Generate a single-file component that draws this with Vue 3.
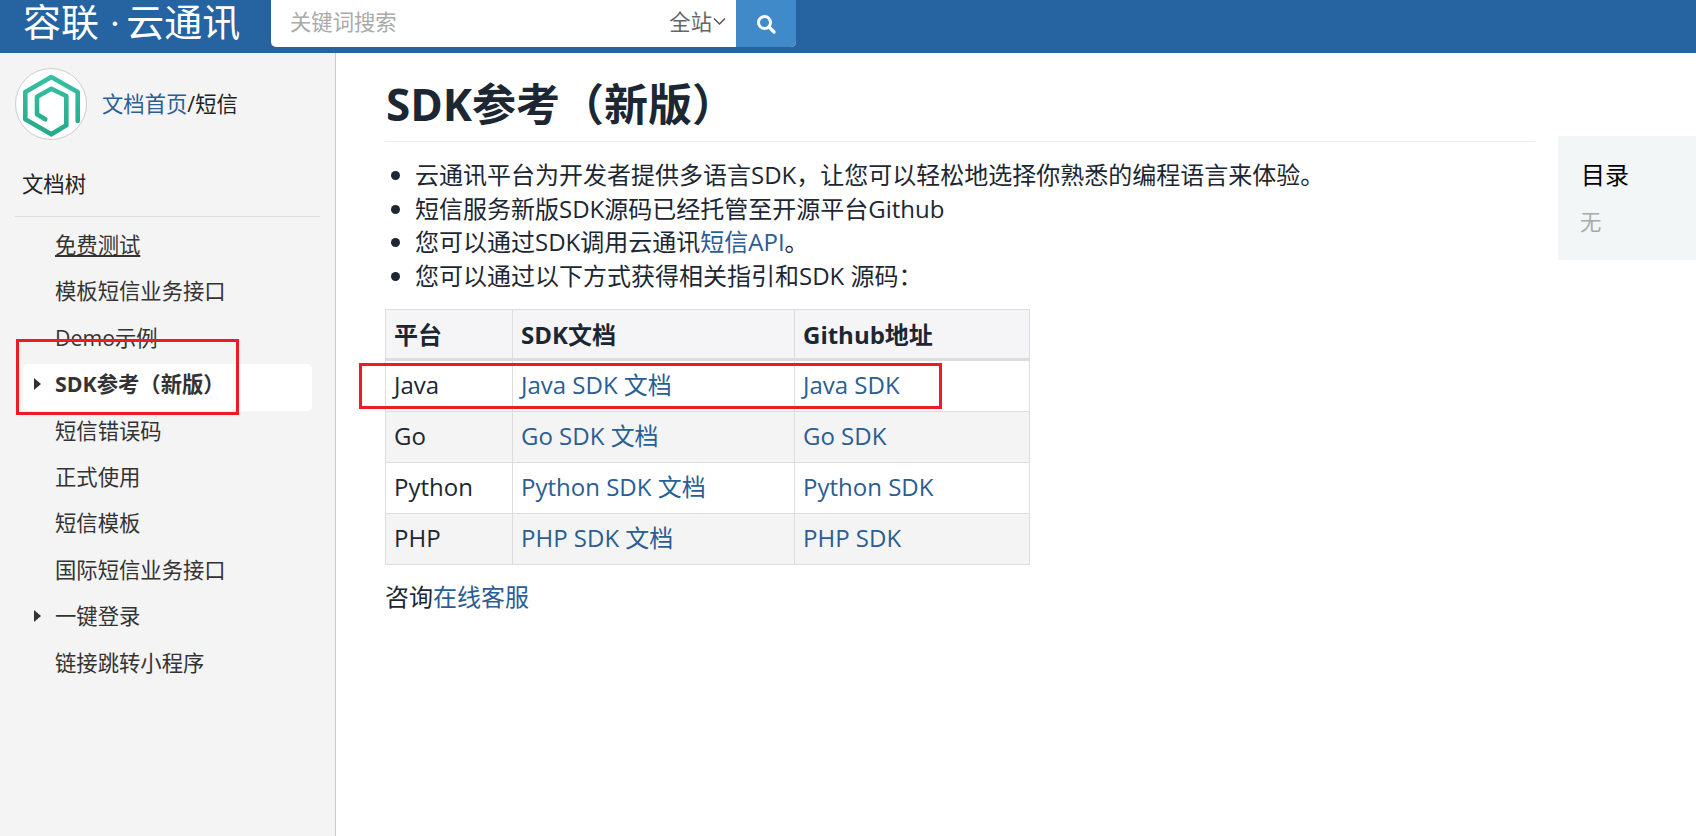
<script setup>
const nav = [
  { t: '免费测试', u: true },
  { t: '模板短信业务接口' },
  { t: 'Demo示例' },
  { t: 'SDK参考（新版）', active: true, arrow: true },
  { t: '短信错误码' },
  { t: '正式使用' },
  { t: '短信模板' },
  { t: '国际短信业务接口' },
  { t: '一键登录', arrow: true },
  { t: '链接跳转小程序' },
]
const rows = [
  ['Java', 'Java SDK 文档', 'Java SDK'],
  ['Go', 'Go SDK 文档', 'Go SDK'],
  ['Python', 'Python SDK 文档', 'Python SDK'],
  ['PHP', 'PHP SDK 文档', 'PHP SDK'],
]
</script>

<template>
  <div class="page">
    <header class="top">
      <div class="brand">容联 <span class="dot">·</span>云通讯</div>
      <div class="search">
        <span class="ph">关键词搜索</span>
        <span class="scope">全站<svg width="13" height="9" viewBox="0 0 13 9"><path d="M1 1.500 6.500 7 12 1.500" fill="none" stroke="#555" stroke-width="1.500"/></svg></span>
        <span class="btn">
          <svg width="20" height="20" viewBox="0 0 20 20"><circle cx="8.500" cy="8.500" r="6" fill="none" stroke="#fff" stroke-width="3"/><path d="M13 13l5 5" stroke="#fff" stroke-width="3.200" stroke-linecap="round"/></svg>
        </span>
      </div>
    </header>
    <div class="body">
      <aside class="side">
        <div class="who">
          <span class="avatar">
            <svg width="70" height="70" viewBox="0 0 70 70">
              <defs><linearGradient id="lg" x1="0" y1="0" x2="0" y2="1"><stop offset="0" stop-color="#38bfa4"/><stop offset="1" stop-color="#25ab89"/></linearGradient></defs>
              <path class="logo" d="M61.700 52V23L35.300 8 9.300 23V50.300L35.300 65.300 50.300 56.300V27L35.300 19.700 21 27.700V45.300L29.300 50.300" fill="none" stroke="url(#lg)" stroke-width="4.600" stroke-linecap="round" stroke-linejoin="round"/>
            </svg>
          </span>
          <span class="crumb"><a>文档首页</a>/短信</span>
        </div>
        <div class="tree">文档树</div>
        <ul class="nav">
          <li v-for="n in nav" :key="n.t" :class="{ active: n.active }">
            <i v-if="n.arrow" class="arrow"></i>
            <span :class="{ u: n.u }">{{ n.t }}</span>
          </li>
        </ul>
      </aside>
      <main class="main">
        <h1>SDK参考（新版）</h1>
        <ul class="list">
          <li>云通讯平台为开发者提供多语言SDK，让您可以轻松地选择你熟悉的编程语言来体验。</li>
          <li>短信服务新版SDK源码已经托管至开源平台Github</li>
          <li>您可以通过SDK调用云通讯<a>短信API</a>。</li>
          <li>您可以通过以下方式获得相关指引和SDK 源码：</li>
        </ul>
        <table>
          <thead><tr><th class="c1">平台</th><th class="c2">SDK文档</th><th class="c3">Github地址</th></tr></thead>
          <tbody>
            <tr v-for="r in rows" :key="r[0]"><td>{{ r[0] }}</td><td><a>{{ r[1] }}</a></td><td><a>{{ r[2] }}</a></td></tr>
          </tbody>
        </table>
        <p class="ask">咨询<a>在线客服</a></p>
      </main>
      <aside class="toc">
        <div class="toc-title">目录</div>
        <div class="toc-none">无</div>
      </aside>
    </div>
    <div class="mark m1"></div>
    <div class="mark m2"></div>
  </div>
</template>

<style>
html, body { margin: 0; background: #fff; overflow: hidden; }
</style>

<style scoped>
.page {
  position: relative;
  width: 1696px;
  height: 836px;
  overflow: hidden;
  font-family: "Open Sans", "Noto Sans CJK SC", sans-serif;
  font-size: 24px;
  line-height: 33.6px;
  color: #1c2733;
}
a { color: #2a5e94; }
.top {
  height: 53px;
  background: #2563a1;
  display: flex;
  align-items: flex-start;
}
.brand {
  width: 271px;
  padding-left: 23px;
  box-sizing: border-box;
  font-family: "Liberation Serif", "Noto Sans CJK SC", serif;
  font-size: 38px;
  line-height: 47px;
  color: #fff;
  white-space: nowrap;
}
.dot { margin-right: 5px; }
.search {
  width: 525px;
  height: 47px;
  background: #fff;
  border-radius: 0 0 5px 5px;
  display: flex;
  align-items: center;
  overflow: hidden;
  font-size: 21.33px;
}
.ph { flex: 1; padding: 0 0 4px 19px; color: #aaa; }
.scope { color: #666; display: flex; align-items: center; gap: 1px; margin-right: 10px; padding-bottom: 4px; }
.btn {
  width: 60px;
  height: 47px;
  background: #408ac9;
  display: flex;
  align-items: center;
  justify-content: center;
}
.body { display: flex; height: 783px; }
.side {
  width: 336px;
  box-sizing: border-box;
  background: #f4f4f4;
  border-right: 1.5px solid #ccc;
  padding: 15px 15px 0;
  color: #333;
  font-size: 21.33px;
  line-height: 30px;
}
.who { display: flex; align-items: center; gap: 15px; height: 72px; }
.avatar {
  width: 70px;
  height: 70px;
  border: 1px solid #ccc;
  border-radius: 50%;
  background: #fff;
  display: block;
  flex: none;
}
.avatar svg { display: block; }
.logo { filter: blur(0.4px); }
.crumb { color: #222; }
.tree {
  margin-top: 10px;
  padding: 19px 7px 17px;
  color: #222;
  border-bottom: 1px solid #ddd;
  height: 30px;
}
.nav { list-style: none; margin: 8px 0 0; padding: 0 0 0 8px; width: 289px; }
.nav li {
  height: 41px;
  padding-bottom: 5.4px;
  line-height: 39px;
  padding-left: 32px;
  position: relative;
  color: #333;
  border-radius: 5px;
}
.nav li.active { background: #fff; font-weight: 700; }
.u { text-decoration: underline; }
.arrow {
  position: absolute;
  left: 11px;
  top: 14px;
  border-left: 7px solid #333;
  border-top: 6px solid transparent;
  border-bottom: 6px solid transparent;
}
.main { width: 1149.5px; margin-left: 49px; }
h1 {
  margin: 0;
  font-size: 44px;
  line-height: 52px;
  padding: 25px 0 11px 1px;
  border-bottom: 1px solid #eee;
  font-weight: 700;
}
.list { margin: 16px 0 0; padding: 0 0 0 30px; }
table {
  margin-top: 16.5px;
  border-collapse: collapse;
  width: 644.5px;
  table-layout: fixed;
}
th, td {
  border: 1.5px solid #ddd;
  padding: 7.9px 8px;
  text-align: left;
  font-weight: 400;
  box-sizing: border-box;
}
td { line-height: 33px; padding-top: 7.4px; padding-bottom: 9.6px; }
th { font-weight: 700; background: #f5f5f7; border-bottom-width: 3px; padding-bottom: 6.4px; padding-top: 7.9px; }
.c1 { width: 127px; }
.c2 { width: 282px; }
tbody tr:nth-child(even) { background: #f4f4f4; }
.ask { margin: 15px 0 0; }
.toc {
  width: 138px;
  height: 124px;
  margin: 83px 0 0 23.5px;
  background: #f3f6f6;
  padding: 22px 0 0 23px;
  box-sizing: border-box;
  flex: none;
}
.toc-title { color: #000; font-size: 24px; }
.toc-none { color: #aaa; margin-top: 13px; margin-left: -1px; font-size: 21.33px; }
.mark { position: absolute; border: 3px solid #ed1c24; box-sizing: border-box; }
.m1 { left: 16px; top: 339px; width: 223px; height: 76px; }
.m2 { left: 359px; top: 363px; width: 583px; height: 46px; }
</style>
